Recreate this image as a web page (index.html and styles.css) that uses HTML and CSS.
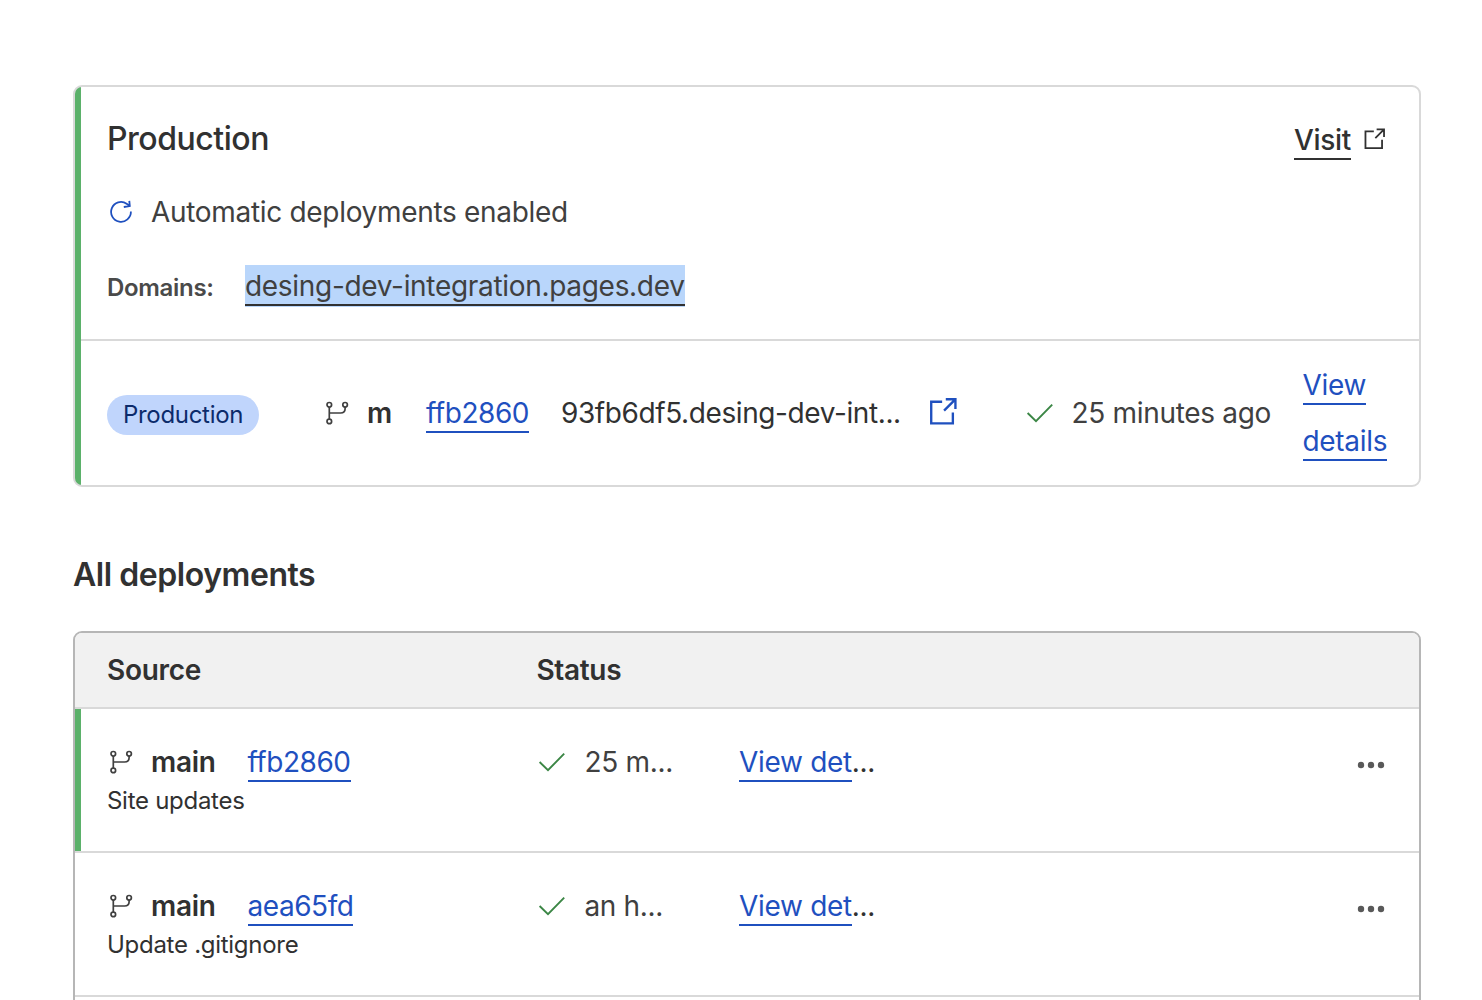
FILE: index.html
```
<!DOCTYPE html>
<html lang="en">
<head>
<meta charset="utf-8">
<title>Deployments</title>
<link rel="stylesheet" href="styles.css">
</head>
<body>
<svg class="sprite" aria-hidden="true">
  <symbol id="branch" viewBox="0 0 28 28"><g fill="none" stroke="currentColor" stroke-width="1.7"><circle cx="6.3" cy="5.8" r="2.3"/><circle cx="6.3" cy="22.4" r="2.3"/><circle cx="22.1" cy="5.8" r="2.3"/><path d="M6.3 8.1v12M6.3 14h11.3c2.8 0 4.5-1.8 4.5-4.2V8.1"/></g></symbol>
  <symbol id="external" viewBox="0 0 28 28"><path d="M13.2 5.4H3v20.2h20.2V15.4M15 13.6 25 3.6M16.6 3h9v9.2" fill="none" stroke="currentColor" stroke-width="2.2"/></symbol>
  <symbol id="check" viewBox="0 0 28 20"><path d="M1.6 10 10 18.2 26.2 1.6" fill="none" stroke="currentColor" stroke-width="1.9"/></symbol>
  <symbol id="dots" viewBox="0 0 28 8"><g fill="currentColor"><circle cx="4" cy="4" r="3.2"/><circle cx="14" cy="4" r="3.2"/><circle cx="24" cy="4" r="3.2"/></g></symbol>
</svg>
<main class="page">
  <section class="card">
    <div class="card-head">
      <div class="title-row">
        <h2 class="card-title">Production</h2>
        <a class="visit"><span class="link link-dark">Visit</span><svg class="icon-visit"><use href="#external"/></svg></a>
      </div>
      <div class="auto">
        <svg class="icon-refresh" viewBox="0 0 28 28"><path d="M23.9 13.6a9.9 9.9 0 1 1-4.3-7.9l3 2M22.3 2.8l.5 5.3-6 .9" fill="none" stroke="currentColor" stroke-width="1.8"/></svg>
        <span>Automatic deployments enabled</span>
      </div>
      <div class="domains"><span class="domains-label">Domains:</span><a class="domain">desing-dev-integration.pages.dev</a></div>
    </div>
    <div class="latest">
      <div class="pill-cell"><span class="pill">Production</span></div>
      <svg class="icon-branch"><use href="#branch"/></svg>
      <strong class="branch">m</strong>
      <div><a class="link hash">ffb2860</a></div>
      <span class="url">93fb6df5.desing-dev-int...</span>
      <svg class="icon-external"><use href="#external"/></svg>
      <svg class="icon-check"><use href="#check"/></svg>
      <span class="time">25 minutes ago</span>
      <div class="details"><a class="link">View details</a></div>
    </div>
  </section>
  <h2 class="section-title">All deployments</h2>
  <section class="table">
    <div class="table-head"><span>Source</span><span>Status</span></div>
    <div class="row row-active">
      <div class="source">
        <div class="source-line"><svg class="icon-branch"><use href="#branch"/></svg><strong class="branch">main</strong><span><a class="link hash">ffb2860</a></span></div>
        <div class="message">Site updates</div>
      </div>
      <div class="status"><svg class="icon-check"><use href="#check"/></svg><span>25 m...</span></div>
      <div class="view"><a class="link">View det</a>...</div>
      <svg class="icon-dots"><use href="#dots"/></svg>
    </div>
    <div class="row">
      <div class="source">
        <div class="source-line"><svg class="icon-branch"><use href="#branch"/></svg><strong class="branch">main</strong><span><a class="link hash">aea65fd</a></span></div>
        <div class="message">Update .gitignore</div>
      </div>
      <div class="status"><svg class="icon-check"><use href="#check"/></svg><span>an h...</span></div>
      <div class="view"><a class="link">View det</a>...</div>
      <svg class="icon-dots"><use href="#dots"/></svg>
    </div>
    <div class="row"></div>
  </section>
</main>
</body>
</html>
```
FILE: styles.css
```
* { box-sizing: border-box; }
body {
  margin: 0;
  height: 1000px;
  overflow: hidden;
  background: #fff;
  color: #313131;
  font: 400 28px/42px Inter, "Liberation Sans", sans-serif;
  letter-spacing: -0.31px;
}
h2 { margin: 0; }
svg { display: block; flex: none; }
.sprite { position: absolute; width: 0; height: 0; }
.page { padding: 85px 61px 0 73px; }
.link {
  color: #1f50bf;
  border-bottom: 2px solid;
  padding-bottom: 1px;
}
.link-dark { color: #313131; font-weight: 500; }
.hash { letter-spacing: -0.45px; }

.card {
  height: 402px;
  border: 2px solid #d9d9d9;
  border-radius: 9px;
  overflow: hidden;
  display: flex;
  flex-direction: column;
  background: linear-gradient(to right, #5bb16a 6px, #fff 6px);
}
.card-head {
  height: 254px;
  margin-left: 6px;
  padding: 32px 33px 0 26px;
  border-bottom: 2px solid #d9d9d9;
}
.title-row { display: flex; justify-content: space-between; height: 40px; }
.card-title { font-size: 32px; font-weight: 500; line-height: 40px; letter-spacing: -0.47px; }
.visit { display: flex; gap: 12px; line-height: 43px; }
.visit .link { height: 41px; padding: 0; }
.icon-visit { width: 23px; height: 23px; margin-top: 8px; }
.auto { display: flex; align-items: center; gap: 16px; margin-top: 32px; color: #404040; }
.icon-refresh { width: 28px; height: 28px; color: #1f50bf; }
.domains { display: flex; align-items: center; height: 42px; margin-top: 32px; }
.domains-label { width: 138px; padding-top: 3px; font-size: 24px; font-weight: 600; color: #4a4a4a; }
.domain {
  height: 42px;
  background: #b9d6fb;
  color: #404040;
  box-shadow: inset 0 -1px #b9d6fb, inset 0 -3px #313131;
}
.latest {
  flex: 1;
  display: grid;
  grid-template-columns: 216px 44px 59px 135px 366.5px 98px 46px 231px 1fr;
  align-items: center;
  padding-left: 32px;
}
.pill-cell { display: flex; padding-top: 4px; }
.pill {
  height: 40px;
  padding: 0 16px;
  border-radius: 20px;
  background: #c0d5fc;
  color: #0c2b6b;
  font-size: 24px;
  line-height: 39px;
}
.icon-branch { width: 28px; height: 28px; color: #404040; }
.branch { font-weight: 600; }
.url { letter-spacing: -0.4px; }
.icon-external { width: 30px; height: 30px; margin-bottom: 4px; color: #1f50bf; }
.icon-check { width: 28px; height: 20px; color: #3b8645; }
.time, .status { color: #404040; }
.details { line-height: 56px; width: 90px; }

.section-title { margin: 67px 0 0; font-size: 32px; font-weight: 600; line-height: 42px; letter-spacing: -0.45px; }
.table {
  height: 400px;
  margin-top: 35px;
  border: 2px solid #b6b6b6;
  border-radius: 9px 9px 0 0;
  overflow: hidden;
}
.table-head, .row {
  display: grid;
  grid-template-columns: 429.4px 202.6px 1fr 28px;
  padding: 0 34px 0 32px;
  border-bottom: 2px solid #d9d9d9;
}
.table-head { height: 76px; background: #f1f1f1; font-weight: 600; line-height: 75px; }
.row { height: 144px; padding-top: 32px; align-items: start; }
.row-active { box-shadow: inset 6px 0 #5bb16a; }
.source-line { display: flex; align-items: center; height: 42px; }
.source-line .branch { margin: 0 32px 0 16px; }
.message { font-size: 24px; line-height: 36px; letter-spacing: -0.28px; }
.status { display: flex; align-items: center; gap: 18px; padding-left: 2px; }
.icon-dots { width: 28px; height: 8px; margin-top: 20px; color: #595959; }
```
